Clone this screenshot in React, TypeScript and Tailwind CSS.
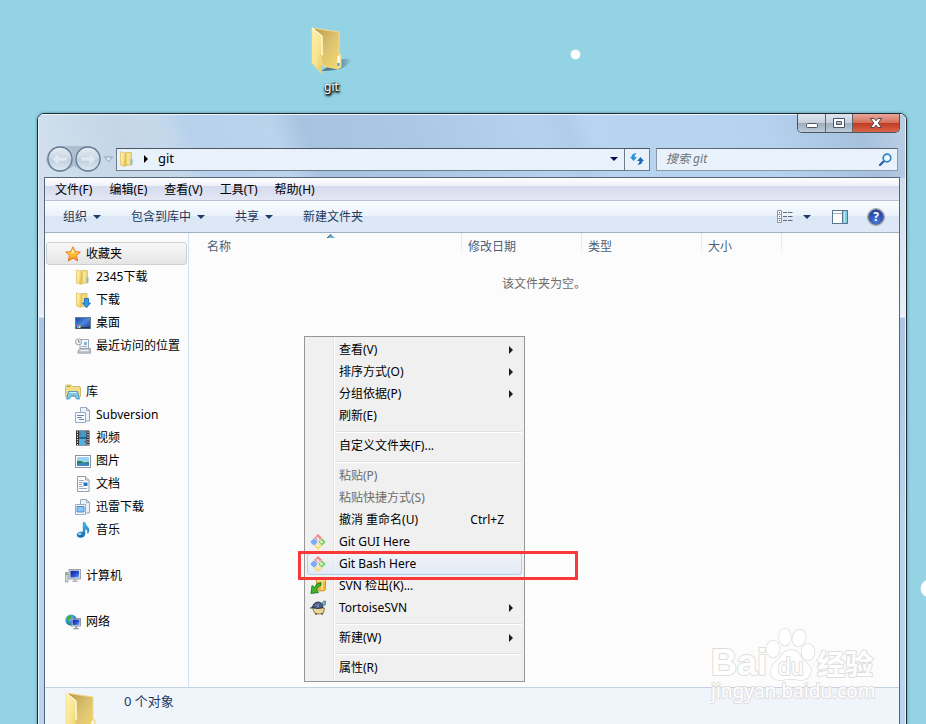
import type { ReactNode } from "react";

type IconProps = { className?: string };

function Defs() {
  return (
    <svg width="0" height="0" className="absolute" aria-hidden="true">
      <defs>
        <linearGradient id="flap" x1="0" y1="0" x2="1" y2="1">
          <stop offset="0" stopColor="#fff3ae" />
          <stop offset="0.55" stopColor="#f8e48f" />
          <stop offset="1" stopColor="#e4bf55" />
        </linearGradient>
        <linearGradient id="back" x1="0" y1="0" x2="1" y2="1">
          <stop offset="0" stopColor="#b9973f" />
          <stop offset="0.5" stopColor="#dcc270" />
          <stop offset="1" stopColor="#f6dd6c" />
        </linearGradient>
        <linearGradient id="fshadow" x1="0" y1="0" x2="1" y2="0">
          <stop offset="0" stopColor="#3c5a66" stopOpacity="0.8" />
          <stop offset="0.6" stopColor="#3c5a66" stopOpacity="0.6" />
          <stop offset="1" stopColor="#3c5a66" stopOpacity="0" />
        </linearGradient>
        <linearGradient id="screen" x1="0" y1="0" x2="1" y2="1">
          <stop offset="0" stopColor="#0a1e8c" />
          <stop offset="0.6" stopColor="#2b55d8" />
          <stop offset="1" stopColor="#7fb0f0" />
        </linearGradient>
        <linearGradient id="desk" x1="0" y1="0" x2="1" y2="1">
          <stop offset="0" stopColor="#173f9b" />
          <stop offset="0.5" stopColor="#4b86dd" />
          <stop offset="1" stopColor="#1d3c8b" />
        </linearGradient>
        <linearGradient id="blue" x1="0" y1="0" x2="0" y2="1">
          <stop offset="0" stopColor="#3fc0f0" />
          <stop offset="1" stopColor="#0f68b4" />
        </linearGradient>
        <linearGradient id="star" x1="0" y1="0" x2="0" y2="1">
          <stop offset="0" stopColor="#ffe38a" />
          <stop offset="0.5" stopColor="#ffc53a" />
          <stop offset="1" stopColor="#f58a1d" />
        </linearGradient>
        <linearGradient id="orb" x1="0" y1="0" x2="0" y2="1">
          <stop offset="0" stopColor="#e6edf4" />
          <stop offset="0.48" stopColor="#cbd8e4" />
          <stop offset="0.5" stopColor="#bccddc" />
          <stop offset="1" stopColor="#dfebf6" />
        </linearGradient>
        <radialGradient id="globe" cx="0.35" cy="0.3" r="0.8">
          <stop offset="0" stopColor="#b4ecff" />
          <stop offset="0.5" stopColor="#2a8ee0" />
          <stop offset="1" stopColor="#0a3b98" />
        </radialGradient>
      </defs>
    </svg>
  );
}

function BigFolder({ className }: IconProps) {
  return (
    <svg viewBox="0 0 42 48" className={className} aria-hidden="true">
      <path d="M12 43 L28 32 L41 32 Q37 41 24 43 Q18 44 10 44Z" fill="url(#fshadow)" />
      <path d="M1 1 L28 5 L28 27 L30 28 L30 40 L27 42 L12 39Z" fill="url(#back)" stroke="#f2dd8e" strokeWidth="1" />
      <path d="M27 28 L30 27 L30 40 L27 41Z" fill="#f4e29b" />
      <path d="M27.500 29 V36" stroke="#fff" strokeWidth="2" />
      <path d="M27.500 36 V39" stroke="#4f9be0" strokeWidth="2" />
      <path d="M1 1 L11 9 L12 28 L10 30 L10 46 L1 36Z" fill="url(#flap)" stroke="#f5dc88" strokeWidth="0.800" />
      <path d="M1 1 L11 9 L11 28" fill="none" stroke="#fffbe6" strokeWidth="1.200" />
    </svg>
  );
}

function SmallFolder() {
  return (
    <svg viewBox="0 0 16 16" className="size-4" aria-hidden="true">
      <path d="M6 1.500 L12.500 1.500 V14 L6 14.500Z" fill="#f4dd7d" stroke="#d8b856" strokeWidth="0.700" />
      <path d="M11.500 8 H13.500 V13.500 L11.500 14Z" fill="#8fb6c8" />
      <path d="M1.500 0.800 L6 2.500 V15.500 L1.500 14Z" fill="url(#flap)" stroke="#dcbd59" strokeWidth="0.700" />
      <path d="M7 3 V14.500" stroke="#d3b154" strokeWidth="0.800" />
      <path d="M9 3 V13" stroke="#fbeeb0" strokeWidth="1" />
    </svg>
  );
}

function DownloadFolder() {
  return (
    <svg viewBox="0 0 16 16" className="size-4" aria-hidden="true">
      <path d="M6 1.500 L12 1.500 V14 L6 14.500Z" fill="#f0d676" stroke="#d0ae4c" strokeWidth="0.700" />
      <path d="M1.500 0.800 L6 2.500 V15.500 L1.500 14Z" fill="url(#flap)" stroke="#dcbd59" strokeWidth="0.700" />
      <path d="M9.500 6.500 H13.500 V11 H15.500 L11.500 15.800 L7.500 11 H9.500Z" fill="#2f9ae6" stroke="#1463b0" strokeWidth="0.800" />
    </svg>
  );
}

function StarIcon() {
  return (
    <svg viewBox="0 0 16 16" className="size-4" aria-hidden="true">
      <path d="M8 0.800 L10.100 5.600 L15.300 6.100 L11.400 9.600 L12.700 15 L8 12.200 L3.200 15 L4.500 9.600 L0.700 6.100 L5.900 5.600Z" fill="url(#star)" stroke="#e2701c" strokeWidth="0.900" strokeLinejoin="round" />
      <path d="M8 3 L9.200 6.500 L6 7 Z" fill="#fff3b8" />
    </svg>
  );
}

function DesktopIcon() {
  return (
    <svg viewBox="0 0 16 16" className="size-4" aria-hidden="true">
      <rect x="0.500" y="2.500" width="15" height="11" fill="url(#desk)" stroke="#6d7f98" />
      <rect x="1" y="12" width="14" height="1.500" fill="#23314f" />
      <path d="M2 10 h2 v1.500 h-2z" fill="#f3622b" />
      <path d="M4 10 h1.500 v1.500 h-1.500z" fill="#8fd14a" />
      <path d="M2 11.500 h2 v1.500 h-2z" fill="#58c3f5" />
      <path d="M4 11.500 h1.500 v1.500 h-1.500z" fill="#ffe08a" />
    </svg>
  );
}

function RecentIcon() {
  return (
    <svg viewBox="0 0 16 16" className="size-4" aria-hidden="true">
      <path d="M5 1.500 H13.500 V11 H5Z" fill="#f3f7fb" stroke="#8b97a5" strokeWidth="0.800" />
      <path d="M9 4 H12 V7 H9Z" fill="#7eb9ea" />
      <path d="M6.500 8.500 H12" stroke="#9aa8b6" />
      <path d="M3 13 L5 10.500 H15.500 V15.200 H3Z" fill="#bfc6cd" stroke="#878f98" strokeWidth="0.700" />
      <path d="M5.500 12.500 H13" stroke="#eef1f4" />
      <circle cx="3.500" cy="3.800" r="3" fill="#f4f6f8" stroke="#8b949e" strokeWidth="0.900" />
      <path d="M3.500 2 V4 H5" fill="none" stroke="#596470" strokeWidth="0.800" />
    </svg>
  );
}

function LibraryIcon() {
  return (
    <svg viewBox="0 0 16 16" className="size-4" aria-hidden="true">
      <path d="M0.500 2.500 Q0.500 1 2 1 H6 L7 2.500 H14 Q15.500 2.500 15.500 4 V12.500 H0.500Z" fill="#f2dc86" stroke="#cfae54" strokeWidth="0.800" />
      <path d="M2 2.500 h3" stroke="#6bb04d" />
      <path d="M3.500 7.500 H12.500 L14.500 15 H11.500 Q11 11.500 8 11.500 Q5 11.500 4.500 15 H1.500Z" fill="#7cc8ea" stroke="#3d8fbc" strokeWidth="0.800" />
      <path d="M4.500 8.500 H11.500" stroke="#d8f3ff" />
    </svg>
  );
}

function DocStackIcon({ filled = false }: { filled?: boolean }) {
  return (
    <svg viewBox="0 0 16 16" className="size-4" aria-hidden="true">
      <path d="M5.500 0.500 H11.500 L14.500 3.500 V14 H5.500Z" fill="#e9f0f7" stroke="#8fa3ba" strokeWidth="0.900" />
      <path d="M11.500 0.500 V3.500 H14.500" fill="none" stroke="#8fa3ba" strokeWidth="0.900" />
      <path d="M0.500 5.500 H10.500 V15.500 H0.500Z" fill="#f7fafd" stroke="#8fa3ba" strokeWidth="0.900" />
      {filled ? (
        <path d="M2 7.500 H9 V13 H2Z" fill="#8cc6f5" stroke="#3d86cc" strokeWidth="0.900" />
      ) : (
        <path d="M2 8.500 H9 M2 10.500 H7 M4 12.500 H9" stroke="#6b86b4" strokeWidth="1" />
      )}
    </svg>
  );
}

function VideoIcon() {
  return (
    <svg viewBox="0 0 16 16" className="size-4" aria-hidden="true">
      <rect x="1" y="0.500" width="13.500" height="15" fill="#28282c" />
      <rect x="4" y="1" width="7.500" height="6.500" fill="#3f9bd6" />
      <rect x="4" y="8.500" width="7.500" height="6.500" fill="#4fb0e4" />
      <path d="M4 1 L6 4 L4 6Z M11.500 9 L9 12 L11.500 14Z M9.500 1 L11.500 1 V4Z" fill="#a85a3c" />
      <path d="M2.500 1.500 V15 M13 1.500 V15" stroke="#fff" strokeWidth="1.200" strokeDasharray="1.200 1.300" />
    </svg>
  );
}

function PictureIcon() {
  return (
    <svg viewBox="0 0 16 16" className="size-4" aria-hidden="true">
      <rect x="0.500" y="2.500" width="15" height="12" fill="#fff" stroke="#8b95a1" />
      <rect x="2" y="4" width="12" height="9" fill="#9ad4f4" />
      <path d="M2 8 Q6 7 9 9.500 L14 9 V11 H2Z" fill="#2e7d5c" />
      <path d="M2 10.500 Q8 9.500 14 11 V13 H2Z" fill="#3f86c6" />
    </svg>
  );
}

function DocumentIcon() {
  return (
    <svg viewBox="0 0 16 16" className="size-4" aria-hidden="true">
      <path d="M2.500 0.500 H10.500 L14 4 V15.500 H2.500Z" fill="#fdfdfe" stroke="#8d939b" strokeWidth="0.900" />
      <path d="M10.500 0.500 V4 H14" fill="#e8ecf0" stroke="#8d939b" strokeWidth="0.900" />
      <path d="M4 4.500 H9 M4 6.500 H8 M4 8.500 H7 M4 10.500 H8 M4 12.500 H12" stroke="#8aa0bd" strokeWidth="0.900" />
      <rect x="8.500" y="6.500" width="4" height="3.500" fill="#2874c4" />
    </svg>
  );
}

function MusicIcon() {
  return (
    <svg viewBox="0 0 16 16" className="size-4" aria-hidden="true">
      <path d="M8.200 0.500 H10 Q10.500 3.500 13 5.500 Q15.200 8 12.800 11.500 Q13.300 7.500 10 6.500 V12 Q9.500 15.500 5.500 15.500 Q1.800 15.200 2 12.500 Q2.800 9.600 8.200 10Z" fill="url(#blue)" stroke="#1a6fae" strokeWidth="0.500" />
      <ellipse cx="4.800" cy="12" rx="1.700" ry="1" fill="#a8e4fb" />
    </svg>
  );
}

function ComputerIcon() {
  return (
    <svg viewBox="0 0 16 16" className="size-4" aria-hidden="true">
      <rect x="0.500" y="4.500" width="2.500" height="9.500" fill="#d5dade" stroke="#8a9197" strokeWidth="0.700" />
      <rect x="1" y="5.500" width="1.500" height="1.500" fill="#46b33c" />
      <rect x="4" y="1.500" width="11.500" height="9.500" fill="#d8dde2" stroke="#8a9197" strokeWidth="0.800" />
      <rect x="5.500" y="2.800" width="8.500" height="6.700" fill="url(#screen)" />
      <path d="M8.500 11 H11.500 V12.500 L13.500 14 H6.500 L8.500 12.500Z" fill="#b3b9bf" />
    </svg>
  );
}

function NetworkIcon() {
  return (
    <svg viewBox="0 0 16 16" className="size-4" aria-hidden="true">
      <circle cx="6" cy="6" r="5.600" fill="url(#globe)" />
      <path d="M1.500 4 Q3 1 6 1 Q8 3 5 5 Q4 8 2 7Z M3 9 Q6 8 6 11 Q4 11 3 9Z" fill="#3dae3b" />
      <rect x="6.500" y="4.500" width="9" height="7.500" fill="#dfe4e9" stroke="#7b8790" strokeWidth="0.800" />
      <rect x="7.500" y="5.500" width="7" height="5.500" fill="url(#screen)" />
      <path d="M10.500 12 h1.500 v2 h1.500 v1.300 h-5 v-1.300 h2z" fill="#8a949d" />
    </svg>
  );
}

function GitIcon() {
  return (
    <svg viewBox="0 0 16 16" className="size-4" aria-hidden="true">
      <path d="M8 0 L11.800 3.800 L8 7.600 L4.200 3.800Z" fill="#f98080" />
      <path d="M4 4.200 L7.800 8 L4 11.800 L0.200 8Z" fill="#79abf8" />
      <path d="M12 4.200 L15.800 8 L12 11.800 L8.200 8Z" fill="#83cf61" />
      <path d="M8 8.400 L11.800 12.200 L8 16 L4.200 12.200Z" fill="#fbdc72" />
      <path d="M5 1.500 L8 4.500 M8 4.500 L11.500 8 M8 4.500 V12" stroke="#f3f3f3" strokeWidth="0.900" />
      <circle cx="8" cy="4.500" r="1.200" fill="#f3f3f3" />
      <circle cx="11.500" cy="8" r="1.200" fill="#f3f3f3" />
      <circle cx="8" cy="11.500" r="1.200" fill="#f3f3f3" />
    </svg>
  );
}

function CheckoutIcon() {
  return (
    <svg viewBox="0 0 16 16" className="size-4" aria-hidden="true">
      <path d="M6.500 2 Q6.500 0.500 11 0.500 Q15.500 0.500 15.500 2 V11.500 Q15.500 13 11 13 Q6.500 13 6.500 11.500Z" fill="#f1b83a" stroke="#c28216" strokeWidth="0.700" />
      <ellipse cx="11" cy="2.200" rx="4.200" ry="1.500" fill="#fbe08c" />
      <path d="M12 4 V12" stroke="#fce7a4" strokeWidth="1.500" />
      <path d="M11 4.500 Q6 5 4.500 9.500 L2 7.500 L1 15.500 L8.500 14.500 L6.500 12 Q7.500 8 11 7.500Z" fill="#3db52c" stroke="#186d12" strokeWidth="0.800" />
    </svg>
  );
}

function TortoiseIcon() {
  return (
    <svg viewBox="0 0 16 16" className="size-4" aria-hidden="true">
      <path d="M2.500 8 H14.500 L13.500 13 Q9 15 4.500 13Z" fill="#ead898" stroke="#71602c" strokeWidth="0.800" />
      <path d="M0.300 8.500 Q2 6.500 4 7.500" fill="none" stroke="#55607a" strokeWidth="1.500" />
      <path d="M2.500 7.500 Q3 2.500 8 2 Q12.500 2 13 7.500 Q8 9.500 2.500 7.500Z" fill="#4d5c82" stroke="#252e48" strokeWidth="0.900" />
      <path d="M5 4.500 L9 6.500 M9 3 L7 8" stroke="#8797bd" strokeWidth="0.800" />
      <path d="M12.500 2.500 Q13 0.500 15.500 1.200 L15.200 5 Q13.500 6 12.500 4.500Z" fill="#7fb9cf" stroke="#355f72" strokeWidth="0.700" />
      <path d="M6 13 V15 M12 13 V15" stroke="#71602c" strokeWidth="1.500" />
    </svg>
  );
}

function Caret({ className = "text-[#1e3c68]" }: IconProps) {
  return (
    <svg viewBox="0 0 8 4" className={`h-1 w-2 ${className}`} aria-hidden="true">
      <path d="M0 0 H8 L4 4Z" fill="currentColor" />
    </svg>
  );
}

function RightArrow({ className = "text-[#1c1c1c]" }: IconProps) {
  return (
    <svg viewBox="0 0 4 8" className={`h-2 w-1 ${className}`} aria-hidden="true">
      <path d="M0 0 L4 4 L0 8Z" fill="currentColor" />
    </svg>
  );
}

type Place = { label: string; icon: ReactNode; child?: boolean; selected?: boolean };

const groups: Place[][] = [
  [
    { label: "收藏夹", icon: <StarIcon />, selected: true },
    { label: "2345下载", icon: <SmallFolder />, child: true },
    { label: "下载", icon: <DownloadFolder />, child: true },
    { label: "桌面", icon: <DesktopIcon />, child: true },
    { label: "最近访问的位置", icon: <RecentIcon />, child: true },
  ],
  [
    { label: "库", icon: <LibraryIcon /> },
    { label: "Subversion", icon: <DocStackIcon />, child: true },
    { label: "视频", icon: <VideoIcon />, child: true },
    { label: "图片", icon: <PictureIcon />, child: true },
    { label: "文档", icon: <DocumentIcon />, child: true },
    { label: "迅雷下载", icon: <DocStackIcon filled />, child: true },
    { label: "音乐", icon: <MusicIcon />, child: true },
  ],
  [{ label: "计算机", icon: <ComputerIcon /> }],
  [{ label: "网络", icon: <NetworkIcon /> }],
];

type Entry = {
  label: string;
  icon?: ReactNode;
  submenu?: boolean;
  shortcut?: string;
  disabled?: boolean;
  hot?: boolean;
};

const menuSections: Entry[][] = [
  [
    { label: "查看(V)", submenu: true },
    { label: "排序方式(O)", submenu: true },
    { label: "分组依据(P)", submenu: true },
    { label: "刷新(E)" },
  ],
  [{ label: "自定义文件夹(F)..." }],
  [
    { label: "粘贴(P)", disabled: true },
    { label: "粘贴快捷方式(S)", disabled: true },
    { label: "撤消 重命名(U)", shortcut: "Ctrl+Z" },
    { label: "Git GUI Here", icon: <GitIcon /> },
    { label: "Git Bash Here", icon: <GitIcon />, hot: true },
    { label: "SVN 检出(K)...", icon: <CheckoutIcon /> },
    { label: "TortoiseSVN", icon: <TortoiseIcon />, submenu: true },
  ],
  [{ label: "新建(W)", submenu: true }],
  [{ label: "属性(R)" }],
];

function CaptionButtons() {
  const face = "bg-[linear-gradient(#dfe6ee,#c6d0dc_48%,#9eadbd_50%,#bccad9)]";
  return (
    <div className="flex h-[19px] overflow-hidden rounded-b-[5px] border border-t-0 border-[#4c5662]">
      <button type="button" aria-label="最小化" className={`flex w-7 items-center justify-center border-r border-[#5c6672] pt-1 ${face}`}>
        <svg viewBox="0 0 12 5" className="h-[5px] w-3"><rect x="0.500" y="0.500" width="11" height="4" rx="1" fill="#fff" stroke="#4c5563" /></svg>
      </button>
      <button type="button" aria-label="最大化" className={`flex w-[27px] items-center justify-center border-r border-[#5c6672] ${face}`}>
        <svg viewBox="0 0 12 10" className="h-[10px] w-3"><path d="M0.500 0.500 H11.500 V9.500 H0.500Z M3.500 3.500 V6.500 H8.500 V3.500Z" fill="#fff" fillRule="evenodd" stroke="#4c5563" /></svg>
      </button>
      <button type="button" aria-label="关闭" className="flex w-[46px] items-center justify-center bg-[linear-gradient(#e9a99b,#d4705b_48%,#bf3a22_50%,#d9654a)]">
        <svg viewBox="0 0 12 10" className="h-[10px] w-3"><path d="M0.500 0.500 H4 L6 2.800 L8 0.500 H11.500 L8.200 5 L11.500 9.500 H8 L6 7.200 L4 9.500 H0.500 L3.800 5Z" fill="#fff" stroke="#4d3440" strokeWidth="0.900" /></svg>
      </button>
    </div>
  );
}

function NavButtons() {
  return (
    <svg viewBox="0 0 70 28" className="h-7 w-[70px] shrink-0" role="img" aria-label="返回 前进">
      <path d="M14 1 H42 Q54 2 55 14 Q53 26 42 27 Q34 26 28 21 Q21 26 14 27 Q2 26 0 14 Q2 2 14 1Z" fill="#9fb3c7" opacity="0.700" />
      <circle cx="14" cy="14" r="12" fill="url(#orb)" stroke="#64798f" strokeWidth="1.300" />
      <circle cx="42" cy="14" r="12" fill="url(#orb)" stroke="#64798f" strokeWidth="1.300" />
      <path d="M6 14 L13 7.500 V12 H21 V16 H13 V20.500Z" fill="#e0e9f2" stroke="#c9d6e2" strokeWidth="0.800" />
      <path d="M50 14 L43 7.500 V12 H35 V16 H43 V20.500Z" fill="#e0e9f2" stroke="#c9d6e2" strokeWidth="0.800" />
      <path d="M58.500 12 H66.500 L62.500 16.500Z" fill="#e3ecf5" stroke="#8499ae" strokeWidth="0.900" />
    </svg>
  );
}

function TitleArea() {
  return (
    <header className="flex h-[63px] flex-col">
      <div className="flex justify-end">
        <CaptionButtons />
      </div>
      <div className="mt-3 flex items-center px-[2px]">
        <NavButtons />
        <div className="flex h-[23px] flex-1 items-center border border-[#6d7b8b] border-t-[#4b5663] bg-[#e9f1fa]">
          <button type="button" className="flex h-full flex-1 items-center pl-[2px] text-[13px]">
            <SmallFolder />
            <span className="ml-[9px]"><RightArrow className="text-black" /></span>
            <span className="ml-[10px]">git</span>
          </button>
          <button type="button" aria-label="以前的位置" className="flex h-full w-[21px] items-center justify-center">
            <Caret className="text-[#0b0b55]" />
          </button>
          <button type="button" aria-label="刷新" className="flex h-full w-[25px] items-center justify-center border-l border-[#6d7b8b]">
            <svg viewBox="0 0 14 12" className="h-3 w-[14px]" aria-hidden="true">
              <path d="M6.500 0 Q1.500 0.500 1.500 4 H0 L3.500 8 L7 4 H4.500 Q4.500 2 6.500 0Z" fill="#2b93d8" />
              <path d="M7.500 12 Q12.500 11.500 12.500 8 H14 L10.500 4 L7 8 H9.500 Q9.500 10 7.500 12Z" fill="#2368bd" />
            </svg>
          </button>
        </div>
        <label className="ml-[6px] flex h-[23px] w-[242px] items-center border border-[#8b9bad] border-t-[#59677a] bg-[#e9f1fa] pr-[5px] pl-[9px]">
          <input type="text" aria-label="搜索 git" placeholder="搜索 git" className="w-full min-w-0 flex-1 bg-transparent text-[12px] italic outline-none placeholder:text-[#6b7178]" />
          <svg viewBox="0 0 13 13" className="size-[13px]" aria-hidden="true">
            <path d="M5.500 7.500 L1 12" stroke="#2a5ba8" strokeWidth="2.200" strokeLinecap="round" />
            <circle cx="8" cy="5" r="3.800" fill="#f3f9ff" stroke="#2d86c8" strokeWidth="1.700" />
          </svg>
        </label>
      </div>
    </header>
  );
}

function ToolbarButton({ children, drop }: { children: ReactNode; drop?: boolean }) {
  return (
    <button type="button" className="flex items-center gap-[6px] text-[12px] text-[#1e395b]">
      {children}
      {drop && <Caret />}
    </button>
  );
}

function Sidebar() {
  return (
    <nav className="w-36 shrink-0 border-r border-[#d3e1f1] pt-[9px]">
      <div className="flex flex-col gap-[23px]">
        {groups.map((group, i) => (
          <ul key={i}>
            {group.map((p) => (
              <li key={p.label} className="px-px">
                <a
                  href="#"
                  className={`flex h-[23px] items-center gap-[5px] rounded-[3px] border text-[12px] whitespace-nowrap text-black ${
                    p.selected ? "border-[#d0d0d0] bg-[linear-gradient(#f8f8f8,#e5e5e5)]" : "border-transparent"
                  } ${p.child ? "pl-7" : "pl-[18px]"}`}
                >
                  {p.icon}
                  {p.label}
                </a>
              </li>
            ))}
          </ul>
        ))}
      </div>
    </nav>
  );
}

const headCell =
  "h-[27px] pl-[6px] text-left font-normal text-[#4c607a] bg-[linear-gradient(#d9e6f4,#dfeaf6_60%,#fcfcfc)] bg-[length:1px_22px] bg-[position:right_top] bg-no-repeat";

function FileList() {
  return (
    <main className="relative flex-1">
      <table className="w-full table-fixed border-collapse text-[12px]">
        <colgroup>
          <col className="w-[273px]" />
          <col className="w-[120px]" />
          <col className="w-[120px]" />
          <col className="w-[80px]" />
          <col />
        </colgroup>
        <thead>
          <tr>
            <th scope="col" className={`${headCell} pl-[18px]`}>名称</th>
            <th scope="col" className={headCell}>修改日期</th>
            <th scope="col" className={headCell}>类型</th>
            <th scope="col" className={headCell}>大小</th>
            <td />
          </tr>
        </thead>
        <tbody>
          <tr>
            <td colSpan={5} className="h-12 text-center text-[#6d6d6d]">该文件夹为空。</td>
          </tr>
        </tbody>
      </table>
      <svg viewBox="0 0 8 4" className="absolute top-px left-[138px] h-1 w-2" aria-hidden="true">
        <path d="M0 4 L4 0 L8 4Z" fill="#6fb3cf" />
        <path d="M0 4 L4 0.500" stroke="#2c5871" />
      </svg>
    </main>
  );
}

function ExplorerWindow() {
  return (
    <section className="absolute top-[113px] right-[19px] -bottom-5 left-[37px] flex flex-col overflow-hidden rounded-t-[7px] border border-[#1f2a33] bg-[linear-gradient(#c3d6ea,#e6eef7_200px,#edf3f9_203px,#abc5e2_204px,#b9d4ef_400px)] shadow-[0_0_3px_rgba(30,60,80,0.5)]">
      <div className="flex flex-1 flex-col bg-[linear-gradient(68deg,#d3e1ef_0,#c4d6e7_90px,#c6d9ea_130px,#b7d1ec_160px,#bad4ee_235px,#a8c3df_265px,#acc7e4_360px,#b5d1ee_480px,#b0cce9_510px,#b8d4f0_530px,#b5d2ee_690px,#a7c1dd_780px,#b5cbe2_810px,#c8d9ea_860px,#d3e1ef_900px)] bg-[length:100%_64px] bg-no-repeat px-[6px] shadow-[inset_0_1px_0_#eef6fc,inset_1px_0_0_#eaf3fa,inset_-1px_0_0_#eaf3fa]">
        <TitleArea />
        <div className="flex flex-1 flex-col border-x border-t border-[#56677b] bg-[#fcfcfc]">
          <div role="menubar" className="flex h-[23px] items-center gap-[17px] border-b border-[#b7bfd2] bg-[linear-gradient(#ffffff,#eef1f9_35%,#d5daed_37%,#e3e7f5)] pt-px pl-[10px] text-[12px] text-black">
            {["文件(F)", "编辑(E)", "查看(V)", "工具(T)", "帮助(H)"].map((m) => (
              <button key={m} type="button" role="menuitem">{m}</button>
            ))}
          </div>
          <div role="toolbar" className="flex h-8 items-center gap-[30px] border-b border-[#a0afc3] bg-[linear-gradient(#fbfdff,#eaf2fb_48%,#dce7f5_50%,#dee8f6)] pr-[15px] pl-[18px]">
            <ToolbarButton drop>组织</ToolbarButton>
            <ToolbarButton drop>包含到库中</ToolbarButton>
            <ToolbarButton drop>共享</ToolbarButton>
            <ToolbarButton>新建文件夹</ToolbarButton>
            <div className="ml-auto flex items-center">
              <button type="button" aria-label="更改视图" className="flex items-center gap-[10px]">
                <svg viewBox="0 0 16 13" className="h-[13px] w-4" aria-hidden="true">
                  <path d="M0.500 0.500 H4.500 V12.500 H0.500Z M0.500 4.500 H4.500 M0.500 8.500 H4.500" fill="#fff" stroke="#8c96a2" />
                  <path d="M2 2.500 H3 M2 10.500 H3" stroke="#333f55" />
                  <path d="M2 6.500 H3" stroke="#e02a2a" />
                  <path d="M6 2.500 H10 M11 2.500 H15.500 M6 6.500 H10 M11 6.500 H15.500 M6 10.500 H10 M11 10.500 H15.500" stroke="#5b6b82" />
                </svg>
                <Caret />
              </button>
              <button type="button" aria-label="显示预览窗格" className="ml-[21px]">
                <svg viewBox="0 0 16 14" className="h-[14px] w-4" aria-hidden="true">
                  <rect x="0.500" y="0.500" width="15" height="13" fill="#fff" stroke="#587790" />
                  <path d="M1 3.500 H10" stroke="#a9b7c5" />
                  <rect x="10" y="1" width="5" height="12" fill="#7fd0e4" />
                  <path d="M10.500 1 V13" stroke="#587790" />
                  <path d="M12.500 2 V12" stroke="#c1ecf6" />
                </svg>
              </button>
              <button type="button" aria-label="帮助" className="ml-5 flex size-4 items-center justify-center rounded-full border border-[#6a6f7c] bg-[radial-gradient(circle_at_50%_80%,#4a7be0,#132f98)] text-[12px] leading-none font-bold text-white ring-1 ring-[#9a9faa]">?</button>
            </div>
          </div>
          <div className="flex flex-1">
            <Sidebar />
            <FileList />
          </div>
          <footer className="flex h-14 shrink-0 items-start overflow-hidden border-t border-[#c3d1e4] bg-[#f0f4fb] pl-5 text-[13px] text-[#1e395b]">
            <BigFolder className="mt-1 h-12 w-[42px]" />
            <p className="mt-1 ml-[17px]">0 个对象</p>
          </footer>
        </div>
      </div>
    </section>
  );
}

function ContextMenu() {
  return (
    <div role="menu" className="absolute top-[336px] left-[304px] w-[221px] border border-[#979797] bg-[#f0f0f0] bg-[linear-gradient(to_right,transparent_28px,#e2e3e3_28px,#e2e3e3_29px,#ffffff_29px,#ffffff_30px,transparent_30px)] p-[2px] text-[12px] text-black">
      {menuSections.map((section, i) => (
        <div key={i}>
          {i > 0 && <hr className="mt-1 mb-[2px] ml-7 h-[2px] border-t border-b border-t-[#e0e0e0] border-b-white" />}
          {section.map((e) => (
            <button
              key={e.label}
              type="button"
              role="menuitem"
              disabled={e.disabled}
              className={`flex h-[22px] w-full items-center rounded-[3px] border pr-2 pl-[2px] text-left ${
                e.hot ? "border-[#aecff7] bg-[linear-gradient(rgba(243,247,253,0.5),rgba(219,231,246,0.7))]" : "border-transparent"
              } ${e.disabled ? "text-[#6d6d6d]" : ""}`}
            >
              <span className="mr-[13px] size-4">{e.icon}</span>
              <span className="flex-1">{e.label}</span>
              {e.shortcut && <span className="mr-[9px]">{e.shortcut}</span>}
              {e.submenu && <RightArrow />}
            </button>
          ))}
        </div>
      ))}
    </div>
  );
}

function Watermark() {
  return (
    <svg viewBox="0 0 170 84" className="absolute right-[46px] bottom-[18px] h-[84px] w-[170px]" aria-hidden="true">
      <g fill="#ffffff" stroke="#dedede" strokeWidth="2" strokeLinejoin="round" paintOrder="stroke">
        <text x="1" y="53" fontFamily="Liberation Sans, sans-serif" fontWeight="700" fontSize="36">Bai</text>
        <ellipse cx="63" cy="27" rx="6.500" ry="8.500" strokeWidth="1.500" />
        <ellipse cx="75" cy="15" rx="6" ry="8.500" strokeWidth="1.500" />
        <ellipse cx="89" cy="16" rx="6.500" ry="8.500" strokeWidth="1.500" transform="rotate(12 89 16)" />
        <ellipse cx="98" cy="30" rx="6.500" ry="8" strokeWidth="1.500" />
        <path d="M81 28 Q88 28 92 37 Q101 43 101 49 Q99 59 90 58 Q81 56 72 58 Q61 59 61 50 Q61 43 69 37 Q74 28 81 28Z" strokeWidth="1.500" />
        <text x="68" y="53" fontFamily="Liberation Sans, sans-serif" fontSize="23">du</text>
        <text x="107" y="53" fontFamily="Noto Sans CJK SC, sans-serif" fontWeight="700" fontSize="28">经验</text>
        <text x="1" y="76" fontFamily="Noto Sans, sans-serif" fontSize="19">jingyan.baidu.com</text>
      </g>
    </svg>
  );
}

export default function App() {
  return (
    <div className="relative h-screen min-h-[724px] overflow-hidden bg-[#93d3e4] font-['Noto_Sans','Noto_Sans_CJK_SC',sans-serif] leading-normal">
      <Defs />
      <button type="button" className="absolute top-[27px] left-[310px] flex w-[43px] flex-col items-center">
        <BigFolder className="h-12 w-[42px]" />
        <span className="mt-1 text-[12px] leading-4 text-white [text-shadow:0_1px_2px_#000,1px_1px_2px_#000,1px_2px_3px_#000]">git</span>
      </button>
      <span className="absolute top-[50px] left-[571px] size-[9px] rounded-full bg-white shadow-[0_0_2px_#fff]" />
      <span className="absolute top-[580px] -right-3 size-[17px] rounded-full bg-white shadow-[0_0_2px_#fff]" />
      <ExplorerWindow />
      <ContextMenu />
      <span className="absolute top-[551px] left-[298px] h-[29px] w-[280px] border-[3px] border-[#fb3838]" />
      <Watermark />
    </div>
  );
}
